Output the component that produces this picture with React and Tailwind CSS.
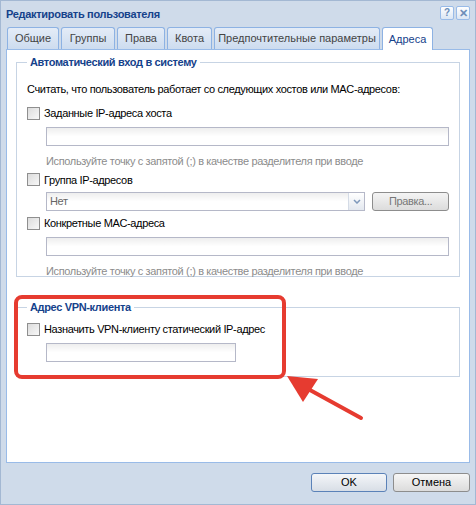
import React from "react";

const FONT = { fontFamily: '"Liberation Sans", Arial, sans-serif' };

function Checkbox() {
  return (
    <span className="inline-block w-[13px] h-[13px] border border-[#8f8f8f] bg-gradient-to-br from-[#dcdcdc] to-[#f8f8f8] shrink-0" />
  );
}

function TextInput({ width = "w-[403px]" }) {
  return (
    <div className={`${width} h-[19px] border border-[#b5b8c8] bg-gradient-to-b from-[#eeeeee] via-white to-white`} />
  );
}

function Hint() {
  return (
    <div className="text-[#8c8c8c] text-[11px] leading-[14px] mt-[8px]">
      Используйте точку с запятой (;) в качестве разделителя при вводе
    </div>
  );
}

function Legend({ children }) {
  return (
    <legend className="px-[3px] ml-0 text-[11px] font-bold text-[#15428b] leading-[14px]">
      {children}
    </legend>
  );
}

const tabs = [
  { label: "Общие", w: "w-[52px]" },
  { label: "Группы", w: "w-[54px]" },
  { label: "Права", w: "w-[48px]" },
  { label: "Квота", w: "w-[45px]" },
  { label: "Предпочтительные параметры", w: "w-[166px]" },
];

export default function App() {
  return (
    <div
      style={FONT}
      className="relative w-[476px] h-[505px] bg-[#cfdbea] border border-[#a3b8d3] flex flex-col text-[11px] text-black overflow-hidden"
    >
      {/* title bar */}
      <div className="h-[26px] flex items-center justify-between pl-[5px] pr-[5px]">
        <span className="font-bold text-[11px] tracking-[-0.3px] text-[#15428b]">Редактировать пользователя</span>
        <div className="flex gap-[2px] -mt-[2px]">
          <span className="w-[14px] h-[14px] border border-[#99bbe8] bg-gradient-to-b from-white to-[#dbe6f4] rounded-[2px] flex items-center justify-center text-[10px] font-bold text-[#6c8db9] leading-none">
            ?
          </span>
          <span className="w-[14px] h-[14px] border border-[#99bbe8] bg-gradient-to-b from-white to-[#dbe6f4] rounded-[2px] flex items-center justify-center text-[11px] font-bold text-[#6c8db9] leading-none">
            ✕
          </span>
        </div>
      </div>

      {/* tabs */}
      <div className="flex items-end gap-[2px] pl-[6px] h-[22px]">
        {tabs.map((t) => (
          <div
            key={t.label}
            className={`${t.w} h-[22px] border border-b-0 border-[#8db2e3] rounded-t-[3px] bg-gradient-to-b from-[#e4ecf7] to-[#cddcef] text-[#444] flex items-center justify-center whitespace-nowrap`}
          >
            {t.label}
          </div>
        ))}
        <div className="w-[51px] h-[23px] -mb-px relative z-10 border border-b-0 border-[#8db2e3] rounded-t-[3px] bg-white text-[#15428b] flex items-center justify-center">
          Адреса
        </div>
      </div>

      {/* panel */}
      <div className="mx-[5px] h-[414px] border border-[#99bbe8] bg-white px-[9px] pt-[5px] tracking-[-0.35px]">
        <fieldset className="border border-[#c7d4e4] px-[10px] h-[222px]">
          <Legend>Автоматический вход в систему</Legend>
          <div className="mt-[13px] leading-[14px]">
            Считать, что пользователь работает со следующих хостов или MAC-адресов:
          </div>

          <div className="flex items-center gap-[4px] mt-[9px]">
            <Checkbox />
            <span>Заданные IP-адреса хоста</span>
          </div>
          <div className="pl-[19px] mt-[5px]">
            <TextInput />
            <Hint />
          </div>

          <div className="flex items-center gap-[4px] mt-[4px]">
            <Checkbox />
            <span>Группа IP-адресов</span>
          </div>
          <div className="pl-[19px] mt-[4px] flex gap-[7px]">
            <div className="w-[319px] h-[19px] border border-[#b5b8c8] bg-gradient-to-b from-[#eeeeee] via-white to-white flex">
              <span className="flex-1 pl-[3px] text-[#666] leading-[17px]">Нет</span>
              <span className="w-[16px] border-l border-[#d4dbe6] bg-gradient-to-b from-white to-[#e3e8ef] flex items-center justify-center">
                <svg width="8" height="5" viewBox="0 0 8 5">
                  <path d="M1 1 L4 4 L7 1" stroke="#7d98bb" strokeWidth="1.5" fill="none" />
                </svg>
              </span>
            </div>
            <div className="w-[77px] h-[19px] border border-[#8d8d8d] rounded-[3px] bg-gradient-to-b from-[#f4f4f4] to-[#dcdcdc] text-[#777] flex items-center justify-center">
              Правка...
            </div>
          </div>

          <div className="flex items-center gap-[4px] mt-[4px]">
            <Checkbox />
            <span>Конкретные MAC-адреса</span>
          </div>
          <div className="pl-[19px] mt-[5px]">
            <TextInput />
            <Hint />
          </div>
        </fieldset>

        <fieldset className="border border-[#c7d4e4] px-[10px] mt-[23px] h-[77px]">
          <Legend>Адрес VPN-клиента</Legend>
          <div className="flex items-center gap-[4px] mt-[7px]">
            <Checkbox />
            <span>Назначить VPN-клиенту статический IP-адрес</span>
          </div>
          <div className="pl-[19px] mt-[5px]">
            <TextInput width="w-[190px]" />
          </div>
        </fieldset>
      </div>

      {/* footer */}
      <div className="flex justify-end gap-[6px] pr-[5px] pt-[10px]">
        <div className="w-[76px] h-[19px] border border-[#5b82b8] rounded-[3px] bg-gradient-to-b from-[#f4f6f9] to-[#d8dee6] flex items-center justify-center">
          OK
        </div>
        <div className="w-[77px] h-[19px] border border-[#8d8d8d] rounded-[3px] bg-gradient-to-b from-[#f6f6f6] to-[#dcdcdc] flex items-center justify-center">
          Отмена
        </div>
      </div>

      {/* annotation */}
      <div className="absolute left-[13px] top-[294px] w-[272px] h-[84px] border-[4px] border-[#e63b30] rounded-[8px] pointer-events-none" />
      <svg className="absolute left-0 top-0 pointer-events-none" width="476" height="505">
        <line x1="360" y1="417" x2="298" y2="383" stroke="#e63b30" strokeWidth="4" strokeLinecap="round" />
        <polygon points="286,375 317,378 302,401" fill="#e63b30" />
      </svg>
    </div>
  );
}
